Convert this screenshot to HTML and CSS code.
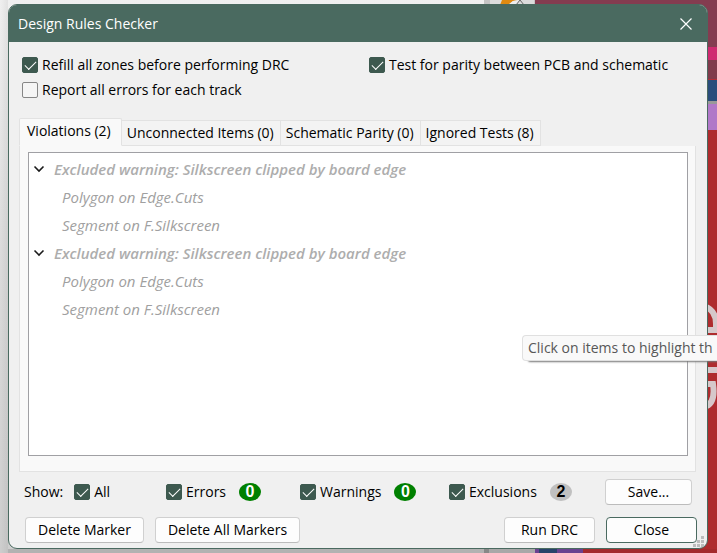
FILE: index.html
```html
<!DOCTYPE html>
<html lang="en">
<head>
<meta charset="utf-8">
<title>Design Rules Checker</title>
<link rel="stylesheet" href="styles.css">
</head>
<body>
<svg class="backdrop" viewBox="0 0 717 553" preserveAspectRatio="xMaxYMin slice" aria-hidden="true">
  <defs>
    <linearGradient id="desk" x1="0" y1="0" x2="0" y2="1"><stop offset="0" stop-color="#f0f0f0"/><stop offset=".45" stop-color="#dcdcdc"/><stop offset="1" stop-color="#cecece"/></linearGradient>
    <linearGradient id="edge"><stop offset="0" stop-color="#000" stop-opacity="0"/><stop offset="1" stop-color="#000" stop-opacity=".06"/></linearGradient>
  </defs>
  <rect width="717" height="553" fill="url(#desk)"/>
  <rect width="8" height="553" fill="url(#edge)"/>
  <rect x="8" y="549" width="476" height="4" fill="#b2b2b2"/>
  <rect x="484" y="0" width="51" height="10" fill="#c4c4c4"/>
  <rect x="490" y="0" width="44" height="10" fill="#dcdcdc"/>
  <path d="M502 0h16l-5 1-5 4h-8z" fill="#e08a10"/>
  <path d="M508 5l5-4 6-1-3 5z" fill="#eee"/>
  <path d="M516 5l4-5 4 5" stroke="#666" fill="none"/>
  <rect x="535" y="0" width="182" height="47" fill="#843c50"/>
  <rect x="700" y="47" width="17" height="13" fill="#cf2a70"/>
  <rect x="700" y="60" width="17" height="19" fill="#803b4c"/>
  <rect x="700" y="79" width="17" height="1" fill="#b32d38"/>
  <rect x="700" y="80" width="17" height="21" fill="#2b4d7c"/>
  <rect x="700" y="101" width="17" height="3" fill="#999"/>
  <rect x="700" y="104" width="17" height="26" fill="#b078c8"/>
  <rect x="700" y="130" width="17" height="423" fill="#ae2c2e"/>
  <g fill="none" stroke="#d6c8ca" stroke-width="6">
    <path d="M704 306q12 4 12 18v6h-12"/>
    <path d="M704 370h13M704 384h9q3 20-9 23"/>
  </g>
  <rect x="484" y="549" width="51" height="4" fill="#a8a8a8"/>
  <rect x="484" y="549" width="5" height="4" fill="#888"/>
  <rect x="535" y="549" width="48" height="4" fill="#6a4290"/>
  <rect x="539" y="549" width="18" height="4" fill="#28446a"/>
  <rect x="583" y="549" width="134" height="4" fill="#a42a2c"/>
</svg>

<main class="dialog">
  <header class="titlebar">
    <h1>Design Rules Checker</h1>
    <button class="close" aria-label="Close window"><svg width="14" height="14" viewBox="0 0 14 14"><path d="M1.5 1.5l11 11M12.5 1.5l-11 11"/></svg></button>
  </header>
  <div class="content">
    <div class="options">
      <label class="check"><input type="checkbox" checked>Refill all zones before performing DRC</label>
      <label class="check"><input type="checkbox" checked>Test for parity between PCB and schematic</label>
      <label class="check"><input type="checkbox">Report all errors for each track</label>
    </div>
    <div class="tabs" role="tablist">
      <button class="tab selected" role="tab" aria-selected="true">Violations (2)</button>
      <button class="tab" role="tab" aria-selected="false">Unconnected Items (0)</button>
      <button class="tab" role="tab" aria-selected="false">Schematic Parity (0)</button>
      <button class="tab" role="tab" aria-selected="false">Ignored Tests (8)</button>
    </div>
    <section class="panel">
      <ul class="tree">
        <li>
          <div class="group"><svg width="12" height="8" viewBox="0 0 12 8"><path d="M1.5 1.5L6 6l4.500-4.500"/></svg>Excluded warning: Silkscreen clipped by board edge</div>
          <ul><li>Polygon on Edge.Cuts</li><li>Segment on F.Silkscreen</li></ul>
        </li>
        <li>
          <div class="group"><svg width="12" height="8" viewBox="0 0 12 8"><path d="M1.5 1.5L6 6l4.500-4.500"/></svg>Excluded warning: Silkscreen clipped by board edge</div>
          <ul><li>Polygon on Edge.Cuts</li><li>Segment on F.Silkscreen</li></ul>
        </li>
      </ul>
    </section>
    <div class="filters">
      <div class="filter"><span class="show">Show:</span><label class="check"><input type="checkbox" checked>All</label></div>
      <div class="filter"><label class="check"><input type="checkbox" checked>Errors</label><span class="badge">0</span></div>
      <div class="filter"><label class="check"><input type="checkbox" checked>Warnings</label><span class="badge">0</span></div>
      <div class="filter"><label class="check"><input type="checkbox" checked>Exclusions</label><span class="badge muted">2</span></div>
      <button class="btn">Save...</button>
    </div>
    <footer class="actions">
      <button class="btn">Delete Marker</button>
      <button class="btn">Delete All Markers</button>
      <button class="btn run">Run DRC</button>
      <button class="btn primary">Close</button>
    </footer>
  </div>
  <svg class="grip" width="11" height="11" viewBox="0 0 11 11" aria-hidden="true"><path d="M8 0h3v3h-3zM4 4h3v3h-3zM8 4h3v3h-3zM0 8h3v3h-3zM4 8h3v3h-3zM8 8h3v3h-3z"/></svg>
</main>
<div class="tooltip" role="tooltip">Click on items to highlight th</div>
</body>
</html>
```
FILE: styles.css
```css
* { box-sizing: border-box; }

body {
  margin: 0;
  min-height: 100vh;
  padding: 4px 9px 4px 8px;
  display: flex;
  position: relative;
  overflow: hidden;
  font: 14px/20px "Open Sans", "Noto Sans", sans-serif;
  color: #000;
}

button, input { font: inherit; color: inherit; margin: 0; }

.backdrop { position: absolute; inset: 0; width: 100%; height: 100%; }

.dialog {
  position: relative;
  flex: 1;
  min-width: 0;
  display: flex;
  flex-direction: column;
  background: #f0f0f0;
  border: 1px solid #4a6a60;
  border-radius: 9px;
  overflow: hidden;
}

.titlebar {
  display: flex;
  align-items: center;
  justify-content: space-between;
  height: 37px;
  padding: 0 14px 0 9px;
  background: #4a6a60;
  color: #fff;
}
.titlebar h1 { margin: 0; font-size: 14px; font-weight: 400; }
.close { display: flex; padding: 0; border: 0; background: none; }
.close svg { fill: none; stroke: #fff; stroke-width: 1.2; }

.content {
  flex: 1;
  display: flex;
  flex-direction: column;
  padding: 11px 10px 5px;
}

.options {
  display: grid;
  grid-template-columns: 347px 1fr;
  row-gap: 1px;
  padding: 0 3px;
}

.check { display: flex; align-items: center; gap: 4px; height: 24px; white-space: nowrap; }
.check input {
  appearance: none;
  width: 16px;
  height: 16px;
  border: 1px solid #868686;
  border-radius: 2px;
  background: #f5f5f5;
}
.check input:checked {
  border-color: #3d594f;
  background: #3d594f;
}
.check input:checked::before {
  content: "";
  display: block;
  width: 10px;
  height: 5px;
  margin: 3px 2px;
  border: solid #fff;
  border-width: 0 0 1px 1px;
  transform: rotate(-45deg);
}

.tabs {
  display: flex;
  align-items: flex-end;
  margin-top: 16px;
}
.tab {
  height: 26px;
  padding: 0 6px 0 5px;
  border: 1px solid #e2e2e2;
  border-left: 0;
  background: #f3f3f3;
  white-space: nowrap;
}
.tab.selected {
  height: 28px;
  padding: 0 10px 2px 7px;
  border-left: 1px solid #e2e2e2;
  border-bottom-color: #f9f9f9;
  background: #f9f9f9;
  border-radius: 2px 2px 0 0;
}

.panel {
  flex: 1;
  display: flex;
  margin-right: 1px;
  padding: 6px 7px 15px 8px;
  background: #f9f9f9;
  border: 1px solid #e2e2e2;
  border-top: 0;
}

.tree {
  flex: 1;
  padding: 2px 4px;
  border: 1px solid #a0a0a4;
  background: #fff;
  color: #adadad;
  font-size: 15px;
  font-style: italic;
  line-height: 28px;
}
ul { margin: 0; padding: 0; list-style: none; }
.tree ul { padding-left: 29px; color: #a0a0a0; }
.group { display: flex; align-items: center; gap: 9px; font-weight: 600; }
.group svg { fill: none; stroke: #1a1a1a; stroke-width: 1.6; }

.filters {
  display: grid;
  grid-template-columns: 142px 134px 149px 1fr auto;
  align-items: center;
  margin-top: 7px;
  padding: 0 5px;
}
.filter { display: flex; align-items: center; }
.show { margin-right: 11px; }
.badge {
  width: 22px;
  height: 18px;
  margin-left: 13px;
  border-radius: 50%;
  background: #008000;
  color: #fff;
  font: 700 16px/18px "Liberation Sans", sans-serif;
  text-align: center;
}
.badge.muted { background: #c0c0c0; color: #000; }

.actions {
  display: flex;
  gap: 11px;
  margin-top: 12px;
  padding-left: 6px;
}
.btn {
  height: 26px;
  min-width: 87px;
  padding: 0 12px;
  border: 1px solid #d0d0d0;
  border-bottom-color: #bcbcbc;
  border-radius: 4px;
  background: #fdfdfd;
  white-space: nowrap;
}
.run { margin-left: auto; min-width: 91px; }
.primary { min-width: 91px; border-color: #4a6a60; }

.grip { position: absolute; right: 3px; bottom: 1px; fill: #bcbcbc; }

.tooltip {
  position: absolute;
  left: 522px;
  right: 0;
  top: 335px;
  padding: 2px 0 2px 5px;
  border: 1px solid #e0e0e0;
  border-right: 0;
  border-radius: 4px 0 0 4px;
  background: #f9f9f9;
  color: #575757;
  white-space: nowrap;
  box-shadow: 4px 3px 2px -2px #777;
}
```
